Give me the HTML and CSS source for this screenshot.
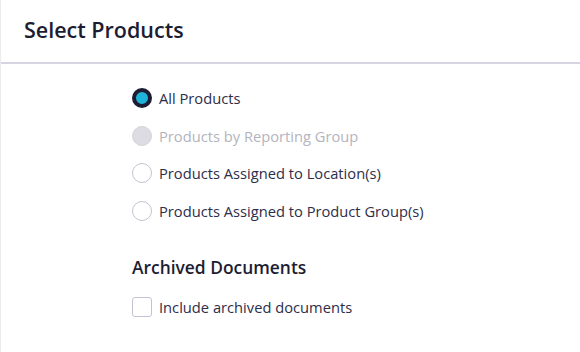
FILE: index.html
```html
<!DOCTYPE html>
<html lang="en">

<head>
    <meta charset="UTF-8">
    <title>Select Products</title>
    <link rel="stylesheet" href="styles.css">
</head>

<body>
    <div class="panel">
        <header class="panel-header">
            <h1>Select Products</h1>
        </header>

        <main class="panel-body">
            <div class="radio-group">
                <label class="option">
                    <span class="radio checked"></span>
                    All Products
                </label>
                <label class="option disabled">
                    <span class="radio"></span>
                    Products by Reporting Group
                </label>
                <label class="option">
                    <span class="radio"></span>
                    Products Assigned to Location(s)
                </label>
                <label class="option">
                    <span class="radio"></span>
                    Products Assigned to Product Group(s)
                </label>
            </div>

            <h2>Archived Documents</h2>
            <label class="option">
                <span class="checkbox"></span>
                Include archived documents
            </label>
        </main>
    </div>
</body>

</html>
```

FILE: styles.css
```css
:root {
    --dark-text: #1c1d33;
    --body-text: #2d2e4a;
    --muted-text: #b4b4be;
    --border-color: #d6d4e2;
    --control-border: #c4c2d2;
    --accent: #1eb4da;
}

body {
    margin: 0;
    font-family: "Open Sans", Lato, sans-serif;
    color: var(--body-text);
    background-color: #ffffff;
}

.panel {
    height: 352px;
    border-left: 1px solid #ececf0;
}

.panel-header {
    height: 62px;
    border-bottom: 2px solid var(--border-color);
    display: flex;
    align-items: center;
    padding-left: 23px;
}

h1 {
    margin: 0 0 3px;
    font-size: 21.5px;
    font-weight: 600;
    color: var(--dark-text);
}

.panel-body {
    padding: 23px 0 0 131px;
}

.radio-group {
    display: flex;
    flex-direction: column;
    gap: 15.5px;
}

.option {
    display: flex;
    align-items: center;
    gap: 7px;
    height: 22px;
    font-size: 14.7px;
}

.option.disabled {
    color: var(--muted-text);
}

.radio {
    width: 18px;
    height: 18px;
    border: 1px solid var(--control-border);
    border-radius: 50%;
    background-color: #ffffff;
}

.option.disabled .radio {
    background-color: #dcdce2;
    border-color: #d4d4dc;
}

.radio.checked {
    width: 12px;
    height: 12px;
    border: 4px solid var(--dark-text);
    background-color: var(--accent);
}

h2 {
    margin: 33px 0 17px;
    font-size: 17.4px;
    font-weight: 600;
    color: var(--dark-text);
}

.checkbox {
    width: 18px;
    height: 18px;
    border: 1px solid var(--control-border);
    border-radius: 3px;
}
```
